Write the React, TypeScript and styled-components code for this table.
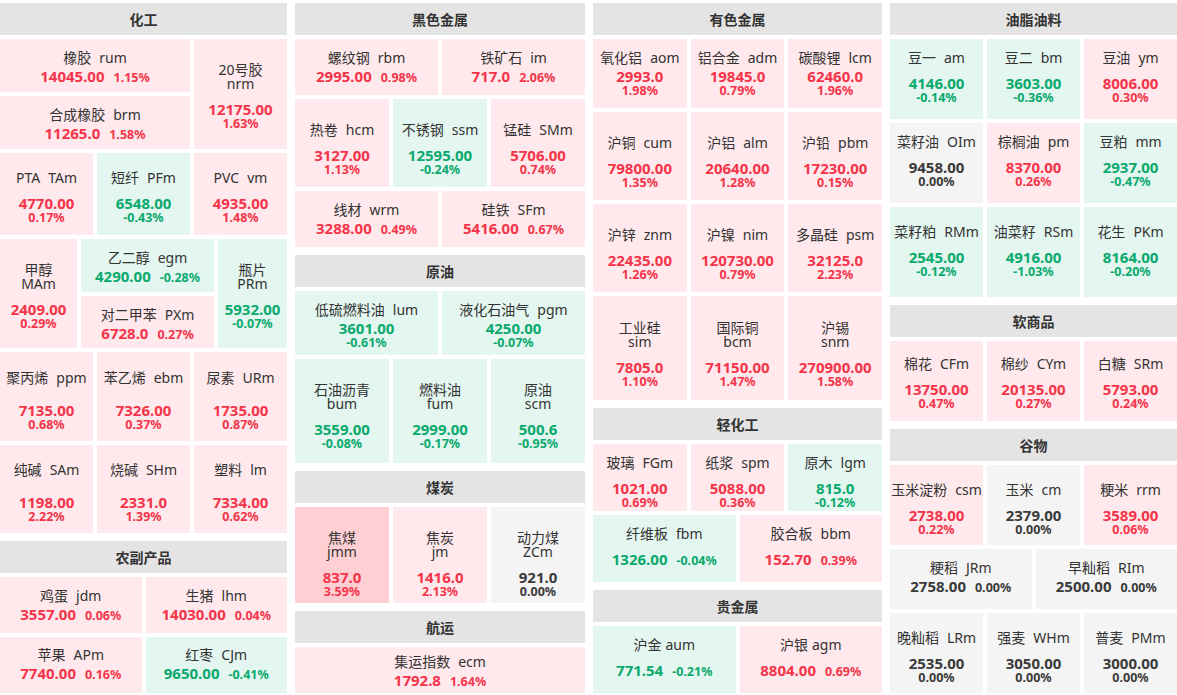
import React from "react";
import styled, { createGlobalStyle } from "styled-components";

type Tone = "up" | "down" | "flat" | "hot";
type Gap = "tight" | "loose" | "wide";

interface Q {
  n: string;
  c: string;
  v: string;
  p: string;
  t: Tone;
  stack?: boolean;
  near?: boolean;
}

const bg: Record<Tone, string> = {
  up: "#ffe9ec",
  down: "#e3f6ef",
  flat: "#f4f4f4",
  hot: "#ffcfd3",
};

const fg: Record<Tone, string> = {
  up: "#f5344a",
  down: "#0aa96d",
  flat: "#3a3a3a",
  hot: "#f5344a",
};

const gaps: Record<Gap, number> = { tight: 3, loose: 10, wide: 17 };

const GlobalStyle = createGlobalStyle`
  html, body { margin: 0; padding: 0; background: #fff; }
  body { font-family: "Noto Sans", "Noto Sans CJK SC", sans-serif; color: #333; }
`;

const Board = styled.main`
  display: grid;
  grid-template-columns: 287px 290px 289px 287px;
  column-gap: 8px;
  align-items: start;
  width: 1177px;
  height: 695px;
  padding-top: 3px;
  box-sizing: border-box;
  overflow: hidden;
`;

const Column = styled.section`
  display: flex;
  flex-direction: column;
  gap: 4px;
`;

const Header = styled.h2`
  margin: 0;
  height: 32px;
  display: flex;
  align-items: center;
  justify-content: center;
  background: #e4e4e4;
  font-size: 14px;
  font-weight: 700;
  color: #333;
  &:not(:first-child) {
    margin-top: 4px;
  }
`;

const Row = styled.div<{ $h: number; $pt: number }>`
  display: flex;
  gap: 4px;
  height: ${(p) => p.$h}px;
  --pt: ${(p) => p.$pt}px;
`;

const Stack = styled.div<{ $grow: number; $pt?: number }>`
  display: flex;
  flex-direction: column;
  gap: 4px;
  flex: ${(p) => p.$grow} 1 0;
  min-width: 0;
  ${(p) => (p.$pt !== undefined ? `--pt: ${p.$pt}px;` : "")}
`;

const Tile = styled.div<{ $tone: Tone; $grow: number; $pt?: number }>`
  flex: ${(p) => p.$grow} 1 0;
  min-width: 0;
  box-sizing: border-box;
  display: flex;
  flex-direction: column;
  align-items: center;
  padding-top: ${(p) => (p.$pt !== undefined ? `${p.$pt}px` : "var(--pt, 12px)")};
  background: ${(p) => bg[p.$tone]};
  text-align: center;
  overflow: hidden;
`;

const Name = styled.div`
  font-size: 14px;
  line-height: 14px;
  color: #333;
  white-space: nowrap;
`;

const Code = styled.span<{ $stack?: boolean; $near?: boolean }>`
  ${(p) => (p.$stack ? "display: block;" : `margin-left: ${p.$near ? 4 : 8}px;`)}
`;

const Figures = styled.div<{ $tone: Tone; $gap: Gap; $inline?: boolean }>`
  display: flex;
  flex-direction: ${(p) => (p.$inline ? "row" : "column")};
  align-items: ${(p) => (p.$inline ? "baseline" : "center")};
  margin-top: ${(p) => gaps[p.$gap]}px;
  color: ${(p) => fg[p.$tone]};
  font-weight: 700;
  white-space: nowrap;
`;

const Price = styled.span`
  font-size: 15px;
  line-height: 16px;
`;

const Pct = styled.span<{ $inline?: boolean }>`
  font-size: 12.5px;
  line-height: ${(p) => (p.$inline ? 16 : 14)}px;
  margin-left: ${(p) => (p.$inline ? 9 : 0)}px;
`;

interface CellProps {
  q: Q;
  gap: Gap;
  inline?: boolean;
  grow?: number;
  pt?: number;
}

const Cell = ({ q, gap, inline, grow = 1, pt }: CellProps) => (
  <Tile $tone={q.t} $grow={grow} $pt={pt}>
    <Name>
      {q.n}
      <Code $stack={q.stack} $near={q.near}>
        {q.c}
      </Code>
    </Name>
    <Figures $tone={q.t} $gap={gap} $inline={inline}>
      <Price>{q.v}</Price>
      <Pct $inline={inline}>{q.p}</Pct>
    </Figures>
  </Tile>
);

interface LineProps {
  h: number;
  pt: number;
  gap: Gap;
  inline?: boolean;
  items: Q[];
}

const Line = ({ h, pt, gap, inline, items }: LineProps) => (
  <Row $h={h} $pt={pt}>
    {items.map((q) => (
      <Cell key={q.c} q={q} gap={gap} inline={inline} />
    ))}
  </Row>
);

const q = (n: string, c: string, v: string, p: string, t: Tone, extra: Partial<Q> = {}): Q => ({
  n,
  c,
  v,
  p,
  t,
  ...extra,
});

export default function App() {
  return (
    <>
      <GlobalStyle />
      <Board>
        {/* 化工 */}
        <Column>
          <Header>化工</Header>
          <Row $h={110} $pt={12}>
            <Stack $grow={190}>
              <Cell q={q("橡胶", "rum", "14045.00", "1.15%", "up")} gap="tight" inline />
              <Cell q={q("合成橡胶", "brm", "11265.0", "1.58%", "up")} gap="tight" inline />
            </Stack>
            <Cell q={q("20号胶", "nrm", "12175.00", "1.63%", "up", { stack: true })} gap="loose" grow={93} pt={24} />
          </Row>
          <Line
            h={82}
            pt={18}
            gap="loose"
            items={[
              q("PTA", "TAm", "4770.00", "0.17%", "up"),
              q("短纤", "PFm", "6548.00", "-0.43%", "down"),
              q("PVC", "vm", "4935.00", "1.48%", "up"),
            ]}
          />
          <Row $h={109} $pt={24}>
            <Cell q={q("甲醇", "MAm", "2409.00", "0.29%", "up", { stack: true })} gap="loose" grow={77} />
            <Stack $grow={133} $pt={12}>
              <Cell q={q("乙二醇", "egm", "4290.00", "-0.28%", "down")} gap="tight" inline />
              <Cell q={q("对二甲苯", "PXm", "6728.0", "0.27%", "up")} gap="tight" inline />
            </Stack>
            <Cell q={q("瓶片", "PRm", "5932.00", "-0.07%", "down", { stack: true })} gap="loose" grow={69} />
          </Row>
          <Line
            h={89}
            pt={19}
            gap="wide"
            items={[
              q("聚丙烯", "ppm", "7135.00", "0.68%", "up"),
              q("苯乙烯", "ebm", "7326.00", "0.37%", "up"),
              q("尿素", "URm", "1735.00", "0.87%", "up"),
            ]}
          />
          <Line
            h={88}
            pt={18}
            gap="wide"
            items={[
              q("纯碱", "SAm", "1198.00", "2.22%", "up"),
              q("烧碱", "SHm", "2331.0", "1.39%", "up"),
              q("塑料", "lm", "7334.00", "0.62%", "up"),
            ]}
          />
          <Header>农副产品</Header>
          <Line
            h={56}
            pt={12}
            gap="tight"
            inline
            items={[
              q("鸡蛋", "jdm", "3557.00", "0.06%", "up"),
              q("生猪", "lhm", "14030.00", "0.04%", "up"),
            ]}
          />
          <Line
            h={56}
            pt={11}
            gap="tight"
            inline
            items={[
              q("苹果", "APm", "7740.00", "0.16%", "up"),
              q("红枣", "CJm", "9650.00", "-0.41%", "down"),
            ]}
          />
        </Column>

        {/* 黑色金属 */}
        <Column>
          <Header>黑色金属</Header>
          <Line
            h={56}
            pt={12}
            gap="tight"
            inline
            items={[
              q("螺纹钢", "rbm", "2995.00", "0.98%", "up"),
              q("铁矿石", "im", "717.0", "2.06%", "up"),
            ]}
          />
          <Line
            h={88}
            pt={24}
            gap="loose"
            items={[
              q("热卷", "hcm", "3127.00", "1.13%", "up"),
              q("不锈钢", "ssm", "12595.00", "-0.24%", "down"),
              q("锰硅", "SMm", "5706.00", "0.74%", "up"),
            ]}
          />
          <Line
            h={56}
            pt={12}
            gap="tight"
            inline
            items={[
              q("线材", "wrm", "3288.00", "0.49%", "up"),
              q("硅铁", "SFm", "5416.00", "0.67%", "up"),
            ]}
          />
          <Header>原油</Header>
          <Line
            h={64}
            pt={12}
            gap="tight"
            items={[
              q("低硫燃料油", "lum", "3601.00", "-0.61%", "down"),
              q("液化石油气", "pgm", "4250.00", "-0.07%", "down"),
            ]}
          />
          <Line
            h={104}
            pt={24}
            gap="loose"
            items={[
              q("石油沥青", "bum", "3559.00", "-0.08%", "down", { stack: true }),
              q("燃料油", "fum", "2999.00", "-0.17%", "down", { stack: true }),
              q("原油", "scm", "500.6", "-0.95%", "down", { stack: true }),
            ]}
          />
          <Header>煤炭</Header>
          <Line
            h={96}
            pt={24}
            gap="loose"
            items={[
              q("焦煤", "jmm", "837.0", "3.59%", "hot", { stack: true }),
              q("焦炭", "jm", "1416.0", "2.13%", "up", { stack: true }),
              q("动力煤", "ZCm", "921.0", "0.00%", "flat", { stack: true }),
            ]}
          />
          <Header>航运</Header>
          <Line h={46} pt={8} gap="tight" inline items={[q("集运指数", "ecm", "1792.8", "1.64%", "up")]} />
        </Column>

        {/* 有色金属 */}
        <Column>
          <Header>有色金属</Header>
          <Line
            h={69}
            pt={12}
            gap="tight"
            items={[
              q("氧化铝", "aom", "2993.0", "1.98%", "up"),
              q("铝合金", "adm", "19845.0", "0.79%", "up"),
              q("碳酸锂", "lcm", "62460.0", "1.96%", "up"),
            ]}
          />
          <Line
            h={88}
            pt={24}
            gap="loose"
            items={[
              q("沪铜", "cum", "79800.00", "1.35%", "up"),
              q("沪铝", "alm", "20640.00", "1.28%", "up"),
              q("沪铅", "pbm", "17230.00", "0.15%", "up"),
            ]}
          />
          <Line
            h={88}
            pt={24}
            gap="loose"
            items={[
              q("沪锌", "znm", "22435.00", "1.26%", "up"),
              q("沪镍", "nim", "120730.00", "0.79%", "up"),
              q("多晶硅", "psm", "32125.0", "2.23%", "up"),
            ]}
          />
          <Line
            h={104}
            pt={25}
            gap="loose"
            items={[
              q("工业硅", "sim", "7805.0", "1.10%", "up", { stack: true }),
              q("国际铜", "bcm", "71150.00", "1.47%", "up", { stack: true }),
              q("沪锡", "snm", "270900.00", "1.58%", "up", { stack: true }),
            ]}
          />
          <Header>轻化工</Header>
          <Line
            h={67}
            pt={12}
            gap="loose"
            items={[
              q("玻璃", "FGm", "1021.00", "0.69%", "up"),
              q("纸浆", "spm", "5088.00", "0.36%", "up"),
              q("原木", "lgm", "815.0", "-0.12%", "down"),
            ]}
          />
          <Line
            h={67}
            pt={12}
            gap="loose"
            inline
            items={[
              q("纤维板", "fbm", "1326.00", "-0.04%", "down"),
              q("胶合板", "bbm", "152.70", "0.39%", "up"),
            ]}
          />
          <Header>贵金属</Header>
          <Line
            h={67}
            pt={12}
            gap="loose"
            inline
            items={[
              q("沪金", "aum", "771.54", "-0.21%", "down", { near: true }),
              q("沪银", "agm", "8804.00", "0.69%", "up", { near: true }),
            ]}
          />
        </Column>

        {/* 油脂油料 */}
        <Column>
          <Header>油脂油料</Header>
          <Line
            h={80}
            pt={12}
            gap="loose"
            items={[
              q("豆一", "am", "4146.00", "-0.14%", "down"),
              q("豆二", "bm", "3603.00", "-0.36%", "down"),
              q("豆油", "ym", "8006.00", "0.30%", "up"),
            ]}
          />
          <Line
            h={80}
            pt={12}
            gap="loose"
            items={[
              q("菜籽油", "OIm", "9458.00", "0.00%", "flat"),
              q("棕榈油", "pm", "8370.00", "0.26%", "up"),
              q("豆粕", "mm", "2937.00", "-0.47%", "down"),
            ]}
          />
          <Line
            h={90}
            pt={18}
            gap="loose"
            items={[
              q("菜籽粕", "RMm", "2545.00", "-0.12%", "down"),
              q("油菜籽", "RSm", "4916.00", "-1.03%", "down"),
              q("花生", "PKm", "8164.00", "-0.20%", "down"),
            ]}
          />
          <Header>软商品</Header>
          <Line
            h={80}
            pt={16}
            gap="loose"
            items={[
              q("棉花", "CFm", "13750.00", "0.47%", "up"),
              q("棉纱", "CYm", "20135.00", "0.27%", "up"),
              q("白糖", "SRm", "5793.00", "0.24%", "up"),
            ]}
          />
          <Header>谷物</Header>
          <Line
            h={80}
            pt={18}
            gap="loose"
            items={[
              q("玉米淀粉", "csm", "2738.00", "0.22%", "up"),
              q("玉米", "cm", "2379.00", "0.00%", "flat"),
              q("粳米", "rrm", "3589.00", "0.06%", "up"),
            ]}
          />
          <Line
            h={60}
            pt={12}
            gap="tight"
            inline
            items={[
              q("粳稻", "JRm", "2758.00", "0.00%", "flat"),
              q("早籼稻", "RIm", "2500.00", "0.00%", "flat"),
            ]}
          />
          <Line
            h={80}
            pt={18}
            gap="loose"
            items={[
              q("晚籼稻", "LRm", "2535.00", "0.00%", "flat"),
              q("强麦", "WHm", "3050.00", "0.00%", "flat"),
              q("普麦", "PMm", "3000.00", "0.00%", "flat"),
            ]}
          />
        </Column>
      </Board>
    </>
  );
}
